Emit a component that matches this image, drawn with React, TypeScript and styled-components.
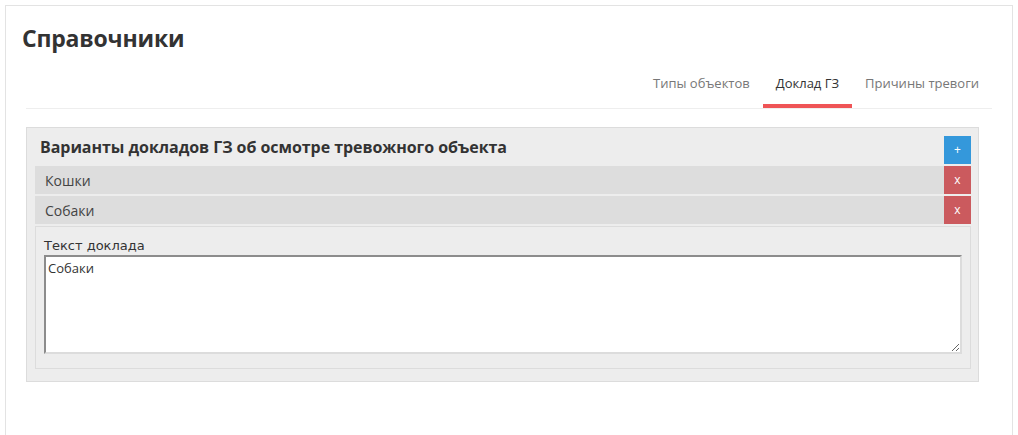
import * as React from 'react';
import { createGlobalStyle, styled } from 'styled-components';

const GlobalStyle = createGlobalStyle`
  html, body {
    margin: 0;
    padding: 0;
    background: #fff;
    font-family: 'Open Sans', 'Liberation Sans', sans-serif;
    color: #333;
  }
  * {
    box-sizing: border-box;
  }
`;

const Page = styled.div`
  margin: 5px 5px 0 5px;
  height: 440px;
  border: 1px solid #e3e3e3;
  border-bottom: none;
  background: #fff;
`;

const Title = styled.h1`
  margin: 0;
  padding: 18px 0 0 16px;
  font-size: 23px;
  line-height: 28px;
  font-weight: 700;
  color: #333;
  letter-spacing: -0.2px;
`;

const Tabs = styled.nav`
  display: flex;
  justify-content: flex-end;
  margin: 9px 20px 0 20px;
  border-bottom: 1px solid #eee;
`;

const Tab = styled.a<{ $active?: boolean }>`
  padding: 13px 13px 12px 13px;
  font-size: 13px;
  line-height: 18px;
  color: ${(p) => (p.$active ? '#333' : '#777')};
  border-bottom: 4px solid ${(p) => (p.$active ? '#ef5456' : 'transparent')};
  cursor: pointer;
  white-space: nowrap;
`;

const Panel = styled.section`
  margin: 18px 33px 0 20px;
  padding: 8px 7px 12px 8px;
  background: #ededed;
  border: 1px solid #dcdcdc;
  display: flex;
  flex-direction: column;
  gap: 2px;
`;

const PanelHeader = styled.div`
  display: flex;
  align-items: center;
  height: 28px;
`;

const PanelTitle = styled.h2`
  flex: 1;
  margin: 0 0 6px 0;
  padding-left: 5px;
  font-size: 16px;
  font-weight: 700;
  color: #333;
  line-height: 20px;
  letter-spacing: -0.05px;
`;

const SquareButton = styled.button<{ $variant: 'add' | 'remove' }>`
  width: 27px;
  height: 28px;
  flex-shrink: 0;
  border: none;
  padding: 0;
  margin: 0;
  font-family: 'Open Sans', 'Liberation Sans', sans-serif;
  font-size: 12px;
  line-height: 28px;
  color: #fff;
  background: ${(p) => (p.$variant === 'add' ? '#3498db' : '#cb5a5e')};
  cursor: pointer;
`;

const Row = styled.div`
  display: flex;
  align-items: center;
  height: 28px;
  background: #dddddd;
`;

const RowLabel = styled.div`
  flex: 1;
  padding-left: 10px;
  font-size: 14px;
  color: #444;
`;

const Editor = styled.div`
  padding: 10px 8px 14px 8px;
  background: #ededed;
  border: 1px solid #dcdcdc;
  display: flex;
  flex-direction: column;
`;

const FieldLabel = styled.label`
  font-family: 'DejaVu Sans', 'Open Sans', sans-serif;
  font-size: 13px;
  line-height: 18px;
  color: #333;
`;

const TextArea = styled.textarea`
  display: block;
  width: 100%;
  height: 99px;
  padding: 2px 2px;
  border-style: solid;
  border-width: 2px;
  border-color: #8c8c8c #dcdcdc #dcdcdc #8c8c8c;
  background: #fff;
  font-family: 'Open Sans', 'Liberation Sans', sans-serif;
  font-size: 13px;
  line-height: 18px;
  color: #333;
  resize: both;
  outline: none;
`;

const reports = [
  { id: 1, title: 'Кошки' },
  { id: 2, title: 'Собаки' },
];

export default function App() {
  const [text, setText] = React.useState('Собаки');

  return (
    <>
      <GlobalStyle />
      <Page>
        <Title>Справочники</Title>
        <Tabs>
          <Tab>Типы объектов</Tab>
          <Tab $active>Доклад ГЗ</Tab>
          <Tab>Причины тревоги</Tab>
        </Tabs>
        <Panel>
          <PanelHeader>
            <PanelTitle>Варианты докладов ГЗ об осмотре тревожного объекта</PanelTitle>
            <SquareButton type="button" $variant="add" title="Добавить">
              +
            </SquareButton>
          </PanelHeader>
          {reports.map((r) => (
            <Row key={r.id}>
              <RowLabel>{r.title}</RowLabel>
              <SquareButton type="button" $variant="remove" title="Удалить">
                x
              </SquareButton>
            </Row>
          ))}
          <Editor>
            <FieldLabel htmlFor="report-text">Текст доклада</FieldLabel>
            <TextArea id="report-text" value={text} onChange={(e) => setText(e.target.value)} />
          </Editor>
        </Panel>
      </Page>
    </>
  );
}
